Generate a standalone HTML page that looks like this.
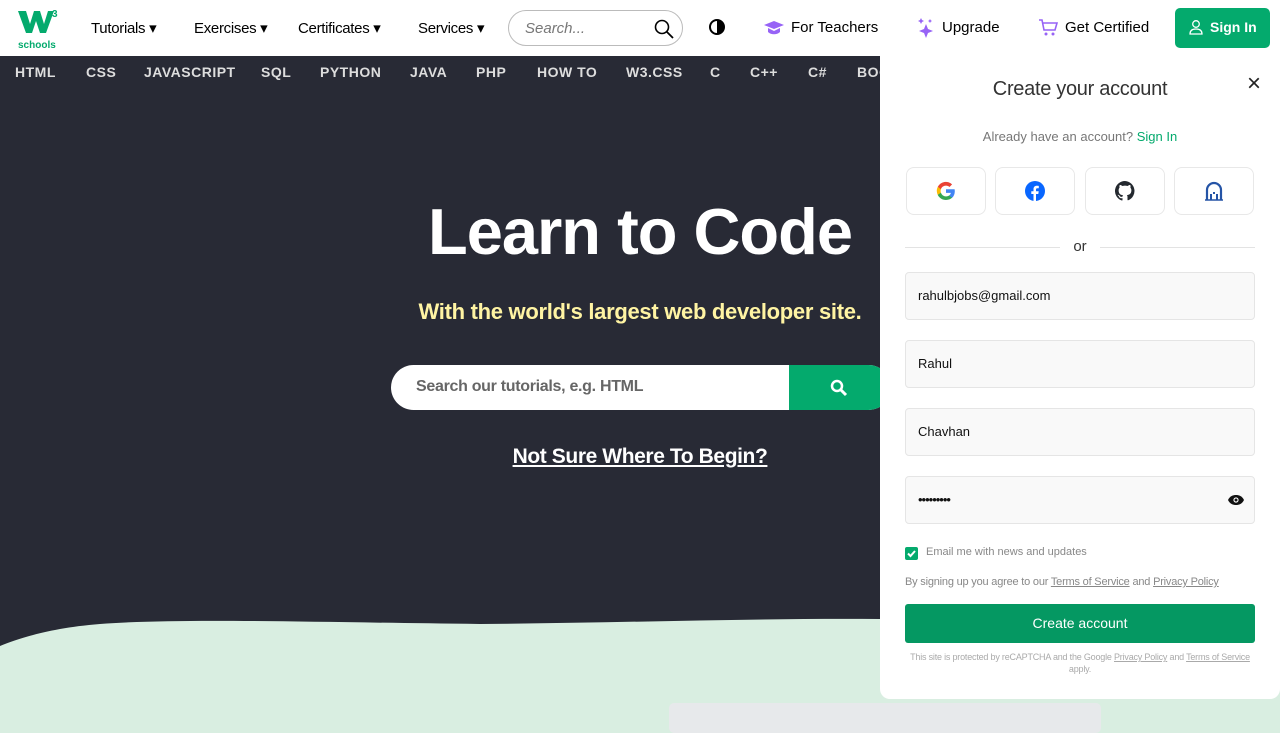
<!DOCTYPE html>
<html><head><meta charset="utf-8"><style>
*{box-sizing:border-box;margin:0;padding:0}
body{width:1280px;height:720px;overflow:hidden;font-family:"Liberation Sans",sans-serif;background:#D9EEE1;position:relative}
.top{position:absolute;left:0;top:0;width:1280px;height:56px;background:#fff}
.nav a{position:absolute;top:19px;font-size:15px;color:#000;letter-spacing:-0.3px}
.sub{position:absolute;left:0;top:56px;width:1280px;height:32px;background:#282A35}
.sub span{position:absolute;top:8px;color:#ddd;font-size:14px;font-weight:bold;letter-spacing:0.5px}
.hero{position:absolute;left:0;top:88px;width:1280px;height:512px;background:#282A35}
.panel{position:absolute;left:880px;top:56px;width:400px;height:643px;background:#fff;border-radius:0 0 10px 10px}
.inp{position:absolute;left:25px;width:350px;height:48px;background:#f9f9f9;border:1px solid #e5e5e5;border-radius:4px;font-size:13px;padding:15px 12px;color:#111}
.sb{position:absolute;top:111px;width:80px;height:48px;border:1px solid #e8e8e8;border-radius:8px;display:flex;align-items:center;justify-content:center}
</style></head><body>
<div class="top">
 <div style="position:absolute;left:18px;top:8px;width:42px;height:40px">
  <svg width="42" height="28" viewBox="0 0 42 28"><path d="M0 3h8l4 13 4-13h6l4 13 4-13h6l-8 22h-6l-4-12-4 12h-6z" fill="#04AA6D"/><text x="34" y="9" font-size="10" font-weight="bold" fill="#04AA6D" font-family="Liberation Sans">3</text></svg>
  <div style="font-size:10px;font-weight:bold;color:#04AA6D;margin-top:-1px">schools</div>
 </div>
 <div class="nav">
  <a style="left:91px">Tutorials ▾</a><a style="left:194px">Exercises ▾</a><a style="left:298px">Certificates ▾</a><a style="left:418px">Services ▾</a>
 </div>
 <div style="position:absolute;left:508px;top:10px;width:175px;height:36px;border:1px solid #bbb;border-radius:18px">
  <span style="position:absolute;left:16px;top:9px;font-style:italic;color:#777;font-size:15px">Search...</span>
  <svg style="position:absolute;right:8px;top:8px" width="20" height="20" viewBox="0 0 20 20"><circle cx="8" cy="8" r="6.5" fill="none" stroke="#000" stroke-width="1.6"/><path d="M13 13l6 6" stroke="#000" stroke-width="1.8"/></svg>
 </div>
 <svg style="position:absolute;left:709px;top:19px" width="16" height="16" viewBox="0 0 16 16"><circle cx="8" cy="8" r="7" fill="none" stroke="#000" stroke-width="2"/><path d="M8 1a7 7 0 0 1 0 14z" fill="#000"/></svg>
 <svg style="position:absolute;left:764px;top:21px" width="20" height="14" viewBox="0 0 20 14"><path d="M10 0l10 4-10 4L0 4z M4 7v4c3 3 9 3 12 0V7l-6 3z" fill="#9763F6"/></svg>
 <span style="position:absolute;left:791px;top:19px;font-size:15px">For Teachers</span>
 <svg style="position:absolute;left:917px;top:18px" width="18" height="20" viewBox="0 0 18 20"><path d="M9 6l2 5 5 2-5 2-2 5-2-5-5-2 5-2z M4 0l1 2 2 1-2 1-1 2-1-2-2-1 2-1z M13 1l.7 1.3 1.3.7-1.3.7L13 5l-.7-1.3L11 3l1.3-.7z" fill="#9763F6"/></svg>
 <span style="position:absolute;left:942px;top:19px;font-size:15px">Upgrade</span>
 <svg style="position:absolute;left:1038px;top:19px" width="20" height="18" viewBox="0 0 20 18"><path d="M1 1h3l2 10h11l2-7H5" fill="none" stroke="#9763F6" stroke-width="1.6"/><circle cx="8" cy="15" r="1.5" fill="#9763F6"/><circle cx="15" cy="15" r="1.5" fill="#9763F6"/></svg>
 <span style="position:absolute;left:1065px;top:19px;font-size:15px">Get Certified</span>
 <div style="position:absolute;left:1175px;top:8px;width:95px;height:40px;background:#04AA6D;border-radius:5px;color:#fff;font-size:14px;font-weight:bold;padding:11px 0 0 35px">Sign In
  <svg style="position:absolute;left:14px;top:12px" width="14" height="15" viewBox="0 0 14 15"><circle cx="7" cy="4" r="3.3" fill="none" stroke="#fff" stroke-width="1.3"/><path d="M1 14c0-4 3-5 6-5s6 1 6 5z" fill="none" stroke="#fff" stroke-width="1.3"/></svg></div>
</div>
<div class="sub">
 <span style="left:15px">HTML</span><span style="left:86px">CSS</span><span style="left:144px">JAVASCRIPT</span><span style="left:261px">SQL</span><span style="left:320px">PYTHON</span><span style="left:410px">JAVA</span><span style="left:476px">PHP</span><span style="left:537px">HOW TO</span><span style="left:626px">W3.CSS</span><span style="left:710px">C</span><span style="left:750px">C++</span><span style="left:808px">C#</span><span style="left:857px">BOOTSTRAP</span>
</div>
<div class="hero"></div>
<svg style="position:absolute;left:0;top:598px" width="1280" height="60" viewBox="0 0 1280 60"><path d="M0 0H1280V14C1150 18 1000 22 880 21C750 20 620 25 480 26C300 24 180 20 100 26C50 30 20 40 0 48Z" fill="#282A35"/></svg>
<div style="position:absolute;left:0;top:194px;width:1280px;text-align:center;color:#fff;font-size:65px;font-weight:bold;letter-spacing:-1px">Learn to Code</div>
<div style="position:absolute;left:0;top:299px;width:1280px;text-align:center;color:#FFF4A3;font-size:22px;font-weight:bold;letter-spacing:-0.3px">With the world's largest web developer site.</div>
<div style="position:absolute;left:391px;top:365px;width:500px;height:45px;background:#fff;border-radius:23px;overflow:hidden">
 <span style="position:absolute;left:25px;top:13px;color:#666;font-size:16px;font-weight:bold;letter-spacing:-0.3px">Search our tutorials, e.g. HTML</span>
 <div style="position:absolute;left:398px;top:0;width:102px;height:45px;background:#04AA6D">
 <svg style="position:absolute;left:41px;top:14px" width="18" height="18" viewBox="0 0 18 18"><circle cx="7" cy="7" r="5" fill="none" stroke="#fff" stroke-width="2.5"/><path d="M11 11l5 5" stroke="#fff" stroke-width="3"/></svg></div>
</div>
<div style="position:absolute;left:0;top:445px;width:1280px;text-align:center;color:#fff;font-size:21px;font-weight:bold;text-decoration:underline;letter-spacing:-0.4px">Not Sure Where To Begin?</div>
<div style="position:absolute;left:669px;top:703px;width:432px;height:30px;background:#E7E9EB;border-radius:5px"></div>
<div class="panel">
 <div style="position:absolute;left:0;top:22px;width:400px;text-align:center;font-size:20px;color:#333;letter-spacing:-0.3px">Create your account</div>
 <div style="position:absolute;left:367px;top:14px;font-size:24px;color:#222">×</div>
 <div style="position:absolute;left:0;top:73px;width:400px;text-align:center;font-size:13px;color:#777">Already have an account? <b style="color:#04AA6D;font-weight:normal">Sign In</b></div>
 <div class="sb" style="left:26px"><svg width="20" height="20" viewBox="0 0 20 20"><path d="M18.8 10.2c0-.7-.1-1.3-.2-1.9H10v3.6h4.9c-.2 1.1-.9 2.1-1.9 2.7v2.3h3c1.8-1.6 2.8-4 2.8-6.7z" fill="#4285F4"/><path d="M10 19c2.5 0 4.6-.8 6.1-2.2l-3-2.3c-.8.6-1.900.9-3.1.9-2.4 0-4.4-1.6-5.1-3.8H1.8v2.4C3.3 17 6.4 19 10 19z" fill="#34A853"/><path d="M4.9 11.6a5.4 5.4 0 0 1 0-3.4V5.8H1.8a9 9 0 0 0 0 8.1z" fill="#FBBC05"/><path d="M10 4.6c1.3 0 2.5.5 3.5 1.4l2.6-2.6A9 9 0 0 0 1.8 5.8l3.1 2.4C5.6 6.1 7.6 4.6 10 4.6z" fill="#EA4335"/></svg></div>
 <div class="sb" style="left:115px"><svg width="20" height="20" viewBox="0 0 20 20"><circle cx="10" cy="10" r="10" fill="#0866FF"/><path d="M11 20v-7h2.3l.4-2.7H11V8.6c0-.8.3-1.3 1.4-1.3h1.4V4.9c-.3 0-1.1-.1-2-.1-2 0-3.3 1.2-3.3 3.4v2.1H6.3V13h2.2v7z" fill="#fff"/></svg></div>
 <div class="sb" style="left:205px"><svg width="20" height="20" viewBox="0 0 16 16"><path d="M8 0a8 8 0 0 0-2.5 15.6c.4 0 .5-.2.5-.4v-1.5c-2.2.5-2.7-1-2.7-1-.4-.9-.9-1.200-.9-1.2-.7-.5.1-.5.1-.5.8.1 1.200.8 1.200.8.7 1.300 1.900.9 2.300.7.1-.5.3-.9.5-1.100-1.800-.2-3.600-.9-3.600-4 0-.9.3-1.600.8-2.100-.1-.2-.4-1 .1-2.100 0 0 .7-.2 2.200.8a7.5 7.5 0 0 1 4 0c1.500-1 2.200-.8 2.200-.8.4 1.100.2 1.900.1 2.100.5.6.8 1.300.8 2.100 0 3.100-1.900 3.700-3.600 3.900.3.3.5.8.5 1.500v2.200c0 .2.1.5.6.4A8 8 0 0 0 8 0z" fill="#24292f"/></svg></div>
 <div class="sb" style="left:294px"><svg width="18" height="20" viewBox="0 0 18 20"><path d="M2 19V9a7 7 0 0 1 14 0v10" fill="none" stroke="#2554A6" stroke-width="2.2"/><path d="M6 19v-6M12 19v-6M9 11v2" stroke="#2554A6" stroke-width="2"/><path d="M0 19h18" stroke="#2554A6" stroke-width="1.5"/></svg></div>
 <div style="position:absolute;left:25px;top:191px;width:155px;border-top:1px solid #e3e3e3"></div>
 <div style="position:absolute;left:220px;top:191px;width:155px;border-top:1px solid #e3e3e3"></div>
 <div style="position:absolute;left:0;top:182px;width:400px;text-align:center;font-size:15px;color:#333">or</div>
 <div class="inp" style="top:216px">rahulbjobs@gmail.com</div>
 <div class="inp" style="top:284px">Rahul</div>
 <div class="inp" style="top:352px">Chavhan</div>
 <div class="inp" style="top:420px;font-size:13px;letter-spacing:-1px">•••••••••
  <svg style="position:absolute;right:10px;top:17px" width="16" height="12" viewBox="0 0 16 12"><path d="M0 6C2 2 5 1 8 1s6 1 8 5c-2 4-5 5-8 5S2 10 0 6z" fill="#111"/><circle cx="8" cy="6" r="2.6" fill="#fff"/><circle cx="8" cy="6" r="1.5" fill="#111"/></svg></div>
 <div style="position:absolute;left:25px;top:491px;width:13px;height:13px;background:#04AA6D;border-radius:2px"><svg width="13" height="13" viewBox="0 0 13 13"><path d="M3 6.5l2.5 2.5 4.5-5" fill="none" stroke="#fff" stroke-width="2"/></svg></div>
 <div style="position:absolute;left:46px;top:490px;font-size:11px;color:#888">Email me with news and updates</div>
 <div style="position:absolute;left:25px;top:520px;font-size:11px;color:#888;letter-spacing:-0.2px">By signing up you agree to our <u>Terms of Service</u> and <u>Privacy Policy</u></div>
 <div style="position:absolute;left:25px;top:548px;width:350px;height:39px;background:#059862;border-radius:3px;color:#fff;font-size:14px;text-align:center;line-height:39px">Create account</div>
 <div style="position:absolute;left:30px;top:595px;width:340px;text-align:center;font-size:9px;color:#aaa;line-height:12px;letter-spacing:-0.2px">This site is protected by reCAPTCHA and the Google <u>Privacy Policy</u> and <u>Terms of Service</u> apply.</div>
</div>
</body></html>
